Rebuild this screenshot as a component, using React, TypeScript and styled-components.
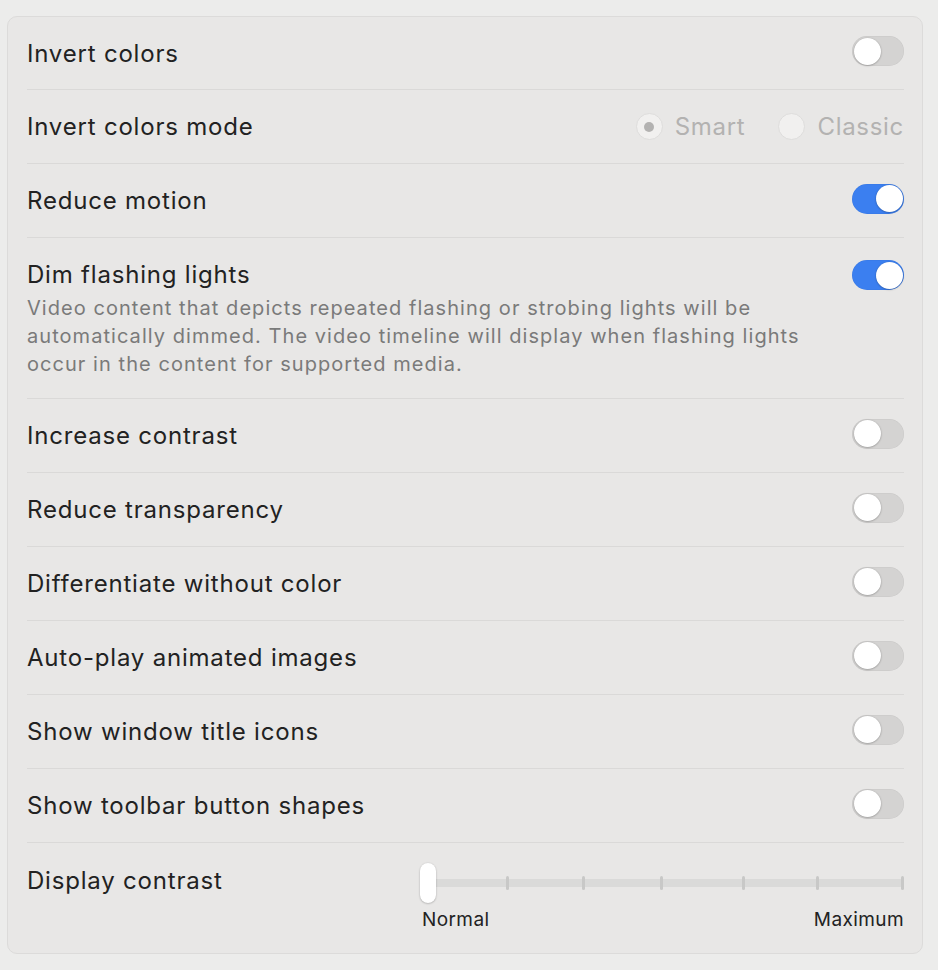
import React, { useState } from "react";
import styled, { createGlobalStyle } from "styled-components";

const GlobalStyle = createGlobalStyle`
  body {
    margin: 0;
    background: #ececeb;
    font-family: Inter, "Noto Sans", "Liberation Sans", sans-serif;
    -webkit-font-smoothing: antialiased;
  }
`;

const Page = styled.div`
  padding: 16px 15px 18px 7px;
`;

const Card = styled.div`
  background: #e8e7e6;
  border: 1px solid #dcdbda;
  border-radius: 10px;
  padding: 0 18px 0 19px;
`;

const Row = styled.div<{ $top?: boolean }>`
  display: flex;
  align-items: ${(p) => (p.$top ? "flex-start" : "center")};
  justify-content: space-between;
  min-height: 73px;
  border-bottom: 1px solid #dad9d8;
  &:first-child {
    min-height: 72px;
  }
  &:last-child {
    border-bottom: none;
  }
`;

const Label = styled.div`
  font-size: 24px;
  color: #222222;
  letter-spacing: 0.8px;
`;

const TextBlock = styled.div`
  padding: 22px 0 20px;
  max-width: 800px;
`;

const Title = styled(Label)`
  line-height: 30px;
`;

const Description = styled.div`
  margin-top: 4px;
  font-size: 20px;
  line-height: 28px;
  color: #7a7a7a;
  letter-spacing: 1.05px;
`;

const Track = styled.button<{ $on: boolean }>`
  position: relative;
  width: 52px;
  height: 30px;
  border: none;
  padding: 0;
  border-radius: 15px;
  background: ${(p) => (p.$on ? "#3b7ff0" : "#d4d3d2")};
  box-shadow: inset 0 0 0 0.5px rgba(0, 0, 0, 0.06);
  cursor: pointer;
  flex-shrink: 0;
`;

const Knob = styled.span<{ $on: boolean }>`
  position: absolute;
  top: 1.5px;
  left: ${(p) => (p.$on ? "23.5px" : "1.5px")};
  width: 27px;
  height: 27px;
  border-radius: 50%;
  background: #ffffff;
  box-shadow: 0 0.5px 2px rgba(0, 0, 0, 0.35);
`;

const ToggleWrap = styled.div<{ $offset?: number }>`
  margin-top: ${(p) => p.$offset ?? 0}px;
`;

function Toggle({ initial, offset }: { initial: boolean; offset?: number }) {
  const [on, setOn] = useState(initial);
  return (
    <ToggleWrap $offset={offset}>
      <Track $on={on} onClick={() => setOn(!on)}>
        <Knob $on={on} />
      </Track>
    </ToggleWrap>
  );
}

const RadioGroup = styled.div`
  display: flex;
  align-items: center;
  gap: 33px;
`;

const RadioItem = styled.label`
  display: flex;
  align-items: center;
  gap: 12px;
  font-size: 24px;
  letter-spacing: 0.7px;
  color: #b3b2b1;
`;

const RadioCircle = styled.span<{ $checked: boolean }>`
  box-sizing: border-box;
  width: 27px;
  height: 27px;
  border-radius: 50%;
  border: 1px solid #dedddc;
  background: #f1f0ef;
  display: flex;
  align-items: center;
  justify-content: center;
  &::after {
    content: "";
    width: 10px;
    height: 10px;
    border-radius: 50%;
    background: #b3b2b1;
    display: ${(p) => (p.$checked ? "block" : "none")};
  }
`;

const SliderRow = styled.div`
  display: flex;
  justify-content: space-between;
  padding: 20px 0 22px;
`;

const SliderLabel = styled(Label)`
  line-height: 36px;
`;

const SliderBox = styled.div`
  width: 484px;
  display: flex;
  flex-direction: column;
`;

const SliderTrackArea = styled.div`
  position: relative;
  height: 40px;
`;

const SliderBar = styled.div`
  position: absolute;
  left: 0;
  right: 0;
  top: 16px;
  height: 8px;
  border-radius: 4px;
  background: #dadad9;
`;

const Tick = styled.div`
  position: absolute;
  top: 13px;
  width: 3px;
  height: 14px;
  border-radius: 1.5px;
  background: #c8c8c7;
`;

const Thumb = styled.div`
  position: absolute;
  left: 0;
  top: 0;
  width: 16px;
  height: 40px;
  border-radius: 8px;
  background: #ffffff;
  box-shadow: 0 0.5px 2px rgba(0, 0, 0, 0.3);
`;

const SliderLabels = styled.div`
  display: flex;
  justify-content: space-between;
  margin-top: 5px;
  padding-left: 2px;
  font-size: 19px;
  letter-spacing: 0.4px;
  color: #222222;
`;

const toggles: { label: string; on: boolean }[] = [
  { label: "Increase contrast", on: false },
  { label: "Reduce transparency", on: false },
  { label: "Differentiate without color", on: false },
  { label: "Auto-play animated images", on: false },
  { label: "Show window title icons", on: false },
  { label: "Show toolbar button shapes", on: false },
];

const ticks = [86, 162, 240, 322, 396, 481];

export default function App() {
  return (
    <>
      <GlobalStyle />
      <Page>
        <Card>
          <Row>
            <Label>Invert colors</Label>
            <Toggle initial={false} />
          </Row>
          <Row>
            <Label>Invert colors mode</Label>
            <RadioGroup>
              <RadioItem>
                <RadioCircle $checked />
                Smart
              </RadioItem>
              <RadioItem>
                <RadioCircle $checked={false} />
                Classic
              </RadioItem>
            </RadioGroup>
          </Row>
          <Row>
            <Label>Reduce motion</Label>
            <Toggle initial />
          </Row>
          <Row $top>
            <TextBlock>
              <Title>Dim flashing lights</Title>
              <Description>
                Video content that depicts repeated flashing or strobing lights will be
                automatically dimmed. The video timeline will display when flashing lights
                occur in the content for supported media.
              </Description>
            </TextBlock>
            <Toggle initial offset={22} />
          </Row>
          {toggles.map((t) => (
            <Row key={t.label}>
              <Label>{t.label}</Label>
              <Toggle initial={t.on} />
            </Row>
          ))}
          <SliderRow>
            <SliderLabel>Display contrast</SliderLabel>
            <SliderBox>
              <SliderTrackArea>
                <SliderBar />
                {ticks.map((x) => (
                  <Tick key={x} style={{ left: x }} />
                ))}
                <Thumb />
              </SliderTrackArea>
              <SliderLabels>
                <span>Normal</span>
                <span>Maximum</span>
              </SliderLabels>
            </SliderBox>
          </SliderRow>
        </Card>
      </Page>
    </>
  );
}
